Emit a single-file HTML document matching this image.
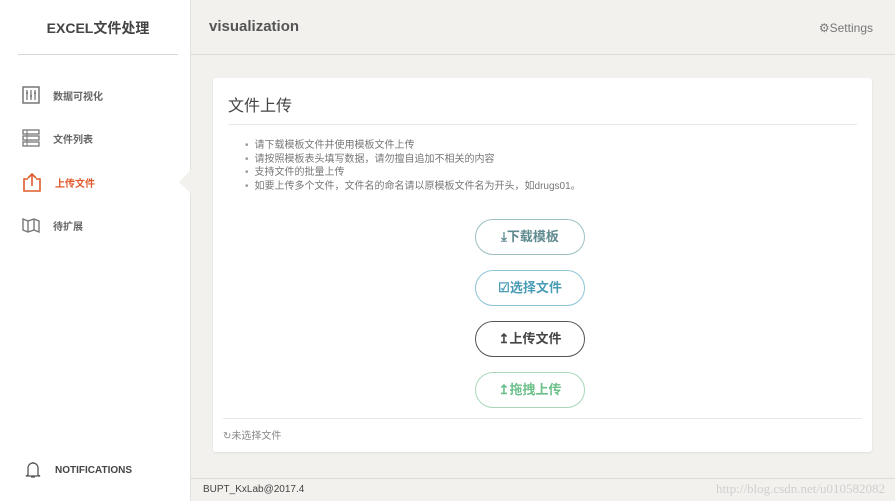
<!DOCTYPE html>
<html><head><meta charset="utf-8"><style>
*{margin:0;padding:0;box-sizing:border-box}
body{width:895px;height:501px;overflow:hidden;background:#f2f1ee;font-family:"Liberation Sans","Noto Sans CJK SC",sans-serif;position:relative;color:#555}
.side{position:absolute;left:0;top:0;width:191px;height:501px;background:#fff;border-right:1px solid #e2e1de}
.logo{position:absolute;left:18px;top:0;width:160px;height:55px;border-bottom:1px solid #d8d8d8;text-align:center;line-height:56px;font-weight:bold;font-size:14px;color:#444}
.nav{position:absolute;left:22px;font-size:10px;font-weight:bold;color:#666;display:flex;align-items:center}
.nav svg{margin-right:13px}
.nav.act{color:#e05a2c}
.arrow{position:absolute;left:179px;top:170px;width:0;height:0;border-top:12px solid transparent;border-bottom:12px solid transparent;border-right:12px solid #f2f1ee}
.head{position:absolute;left:191px;top:0;right:0;height:55px;border-bottom:1px solid #dcdbd8;background:#f2f1ee}
.title{position:absolute;left:18px;top:18px;font-size:15px;font-weight:bold;color:#555}
.set{position:absolute;right:22px;top:21px;font-size:12px;color:#777}
.card{position:absolute;left:213px;top:78px;width:659px;height:374px;background:#fff;border-radius:3px;box-shadow:0 1px 2px rgba(0,0,0,.08)}
.card h2{position:absolute;left:15px;top:14px;font-size:16px;font-weight:normal;color:#444}
.hr1{position:absolute;left:15px;right:15px;top:46px;border-top:1px solid #e8e8e8}
ul{position:absolute;left:32px;top:61px;font-size:10px;line-height:13.5px;color:#777;list-style:none}
ul li:before{content:"•";margin-right:6px;color:#999}
.btn{position:absolute;left:262px;width:110px;height:36px;border:1px solid;border-radius:18px;text-align:center;line-height:34px;font-size:13px;font-weight:bold}
.hr2{position:absolute;left:10px;right:10px;top:340px;border-top:1px solid #e8e8e8}
.none{position:absolute;left:10px;top:349px;font-size:10px;color:#888}
.foot{position:absolute;left:191px;top:478px;right:0;height:23px;border-top:1px solid #dcdbd8;font-size:10px;color:#444;padding:5px 0 0 12px}
.wm{position:absolute;right:10px;top:481px;font-family:"Liberation Serif",serif;font-size:13px;color:#cfcfcf}
</style></head><body>
<div class="side">
<div class="logo">EXCEL文件处理</div>
<div class="nav" style="top:86px"><svg width="18" height="18"><rect x="1" y="1" width="16" height="16" fill="none" stroke="#777" stroke-width="1.5"/><path d="M5 4v10M9 4v10M13 4v10" stroke="#777" stroke-width="1.3"/><path d="M4 7h2M8 10h2M12 7h2" stroke="#777" stroke-width="1.5"/></svg>数据可视化</div>
<div class="nav" style="top:129px"><svg width="18" height="18"><rect x="1" y="1" width="16" height="4" fill="none" stroke="#777" stroke-width="1.3"/><rect x="1" y="7" width="16" height="4" fill="none" stroke="#777" stroke-width="1.3"/><rect x="1" y="13" width="16" height="4" fill="none" stroke="#777" stroke-width="1.3"/><path d="M5 1v16" stroke="#777"/></svg>文件列表</div>
<div class="nav act" style="top:172px"><svg width="20" height="20"><path d="M6 7H2v12h16V7h-4" fill="none" stroke="#e05a2c" stroke-width="1.6"/><path d="M10 14V2M6 6l4-4 4 4" fill="none" stroke="#e05a2c" stroke-width="1.6"/></svg>上传文件</div>
<div class="nav" style="top:217px"><svg width="18" height="16"><path d="M1 2l5 2 6-2 5 2v11l-5-2-6 2-5-2z M6 4v11M12 2v11" fill="none" stroke="#777" stroke-width="1.4"/></svg>待扩展</div>
<div class="nav" style="top:460px;color:#444"><svg width="18" height="20" style="margin-left:2px"><path d="M4 15V8a5 5 0 0 1 10 0v7l2 1H2z M9 2v1M7 17h4" fill="none" stroke="#555" stroke-width="1.3"/></svg>NOTIFICATIONS</div>
<div class="arrow"></div>
</div>
<div class="head"><div class="title">visualization</div><div class="set">⚙Settings</div></div>
<div class="card">
<h2>文件上传</h2><div class="hr1"></div>
<ul><li>请下载模板文件并使用模板文件上传</li><li>请按照模板表头填写数据，请勿擅自追加不相关的内容</li><li>支持文件的批量上传</li><li>如要上传多个文件，文件名的命名请以原模板文件名为开头，如drugs01。</li></ul>
<div class="btn" style="top:141px;border-color:#9cc0c0;color:#5f8a8f">⤓下载模板</div>
<div class="btn" style="top:192px;border-color:#8cc4d6;color:#4a9bb6">☑选择文件</div>
<div class="btn" style="top:243px;border-color:#555;color:#444">↥上传文件</div>
<div class="btn" style="top:294px;border-color:#a8d8b8;color:#6cc08a">↥拖拽上传</div>
<div class="hr2"></div>
<div class="none">↻未选择文件</div>
</div>
<div class="foot">BUPT_KxLab@2017.4</div>
<div class="wm">http://blog.csdn.net/u010582082</div>
</body></html>
